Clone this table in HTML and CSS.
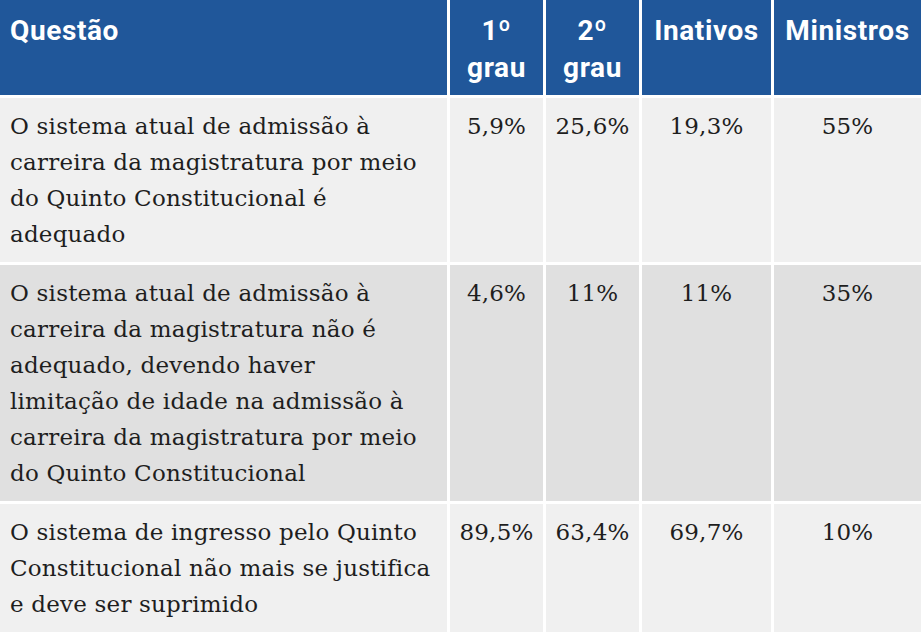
FILE: index.html
```html
<!DOCTYPE html>
<html lang="pt">
<head>
<meta charset="utf-8">
<link rel="stylesheet" href="styles.css">
</head>
<body>
<div class="wrap">
<table class="survey">
  <colgroup>
    <col class="c-q">
    <col class="c-1">
    <col class="c-2">
    <col class="c-in">
    <col class="c-min">
  </colgroup>
  <thead>
    <tr>
      <th class="h-left">Questão</th>
      <th>1º<br>grau</th>
      <th>2º<br>grau</th>
      <th>Inativos</th>
      <th>Ministros</th>
    </tr>
  </thead>
  <tbody>
    <tr class="odd">
      <td class="q">O sistema atual de admissão à carreira da magistratura por meio do Quinto Constitucional é adequado</td>
      <td class="n">5,9%</td>
      <td class="n">25,6%</td>
      <td class="n">19,3%</td>
      <td class="n">55%</td>
    </tr>
    <tr class="even">
      <td class="q">O sistema atual de admissão à carreira da magistratura não é adequado, devendo haver limitação&nbsp;de idade na admissão à carreira da magistratura por meio do Quinto Constitucional</td>
      <td class="n">4,6%</td>
      <td class="n">11%</td>
      <td class="n">11%</td>
      <td class="n">35%</td>
    </tr>
    <tr class="odd">
      <td class="q">O sistema de ingresso pelo Quinto Constitucional não mais se justifica e deve ser suprimido</td>
      <td class="n">89,5%</td>
      <td class="n">63,4%</td>
      <td class="n">69,7%</td>
      <td class="n">10%</td>
    </tr>
  </tbody>
</table>
</div>
</body>
</html>
```
FILE: styles.css
```css
html, body {
  margin: 0;
  padding: 0;
  background: #ffffff;
  overflow: hidden;
}

.wrap {
  width: 921px;
  height: 632px;
  overflow: hidden;
}

.survey {
  table-layout: fixed;
  border-collapse: separate;
  border-spacing: 3px;
  margin: -3px;
  width: 927px;
}

.c-q { width: 447px; }
.c-1 { width: 93px; }
.c-2 { width: 93px; }
.c-in { width: 129px; }
.c-min { width: 147px; }

.survey th {
  background: #20579a;
  color: #ffffff;
  font-family: Roboto, "Noto Sans", sans-serif;
  font-weight: 700;
  font-size: 28px;
  letter-spacing: 0.6px;
  line-height: 37px;
  text-align: center;
  vertical-align: top;
  padding: 12px 2px 9px;
  height: 74px;
}

.survey th.h-left {
  text-align: left;
  padding-left: 10px;
}

.survey td {
  font-family: "DejaVu Serif", "Liberation Serif", serif;
  font-size: 23px;
  letter-spacing: 0.2px;
  line-height: 36px;
  color: #1e1e1e;
  vertical-align: top;
  padding: 10px;
}

.survey td.n {
  text-align: center;
  padding-left: 2px;
  padding-right: 2px;
}

.survey tr.odd td { background: #f0f0f0; }
.survey tr.even td { background: #e0e0e0; }
```
